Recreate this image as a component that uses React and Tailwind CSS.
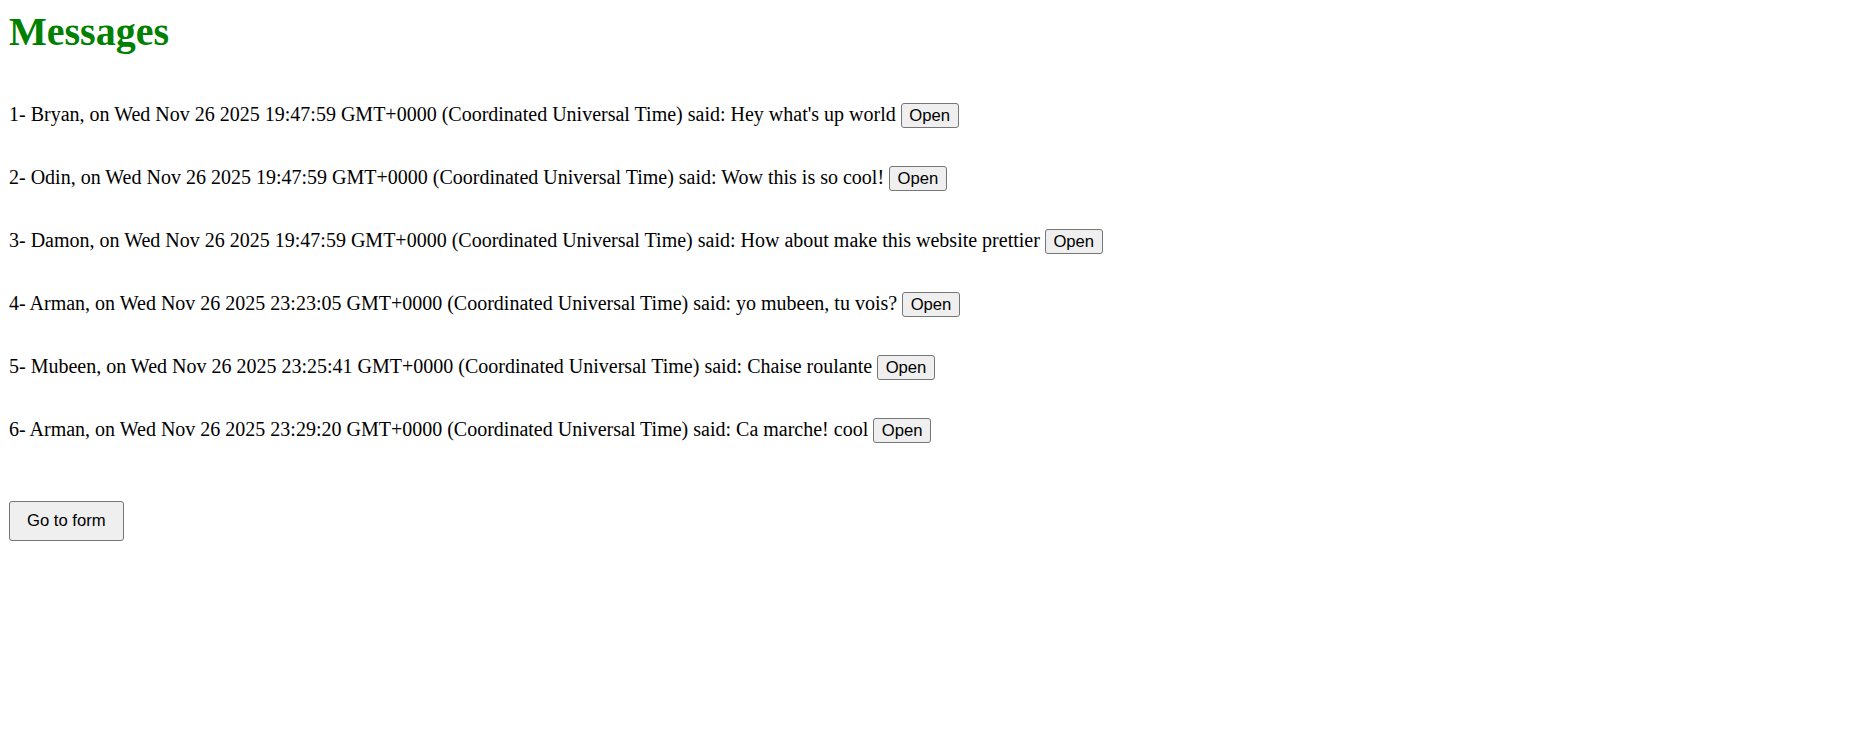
const messages = [
  { user: 'Bryan', date: 'Wed Nov 26 2025 19:47:59 GMT+0000 (Coordinated Universal Time)', text: "Hey what's up world" },
  { user: 'Odin', date: 'Wed Nov 26 2025 19:47:59 GMT+0000 (Coordinated Universal Time)', text: 'Wow this is so cool!' },
  { user: 'Damon', date: 'Wed Nov 26 2025 19:47:59 GMT+0000 (Coordinated Universal Time)', text: 'How about make this website prettier' },
  { user: 'Arman', date: 'Wed Nov 26 2025 23:23:05 GMT+0000 (Coordinated Universal Time)', text: 'yo mubeen, tu vois?' },
  { user: 'Mubeen', date: 'Wed Nov 26 2025 23:25:41 GMT+0000 (Coordinated Universal Time)', text: 'Chaise roulante' },
  { user: 'Arman', date: 'Wed Nov 26 2025 23:29:20 GMT+0000 (Coordinated Universal Time)', text: 'Ca marche! cool' },
];

export default function App() {
  return (
    <div className="min-h-screen bg-white px-[9px] pt-[9px] text-black font-['Liberation_Serif',serif] text-[20px]">
      <h1 className="text-[40px] font-bold leading-[46px] text-[#008000]">Messages</h1>

      <div className="mt-[47px] flex flex-col gap-[37.4px]">
        {messages.map((m, i) => (
          <div key={i} className="h-[25.6px] leading-[25.6px] whitespace-nowrap">
            {i + 1}- {m.user}, on {m.date} said: {m.text}{' '}
            <button className="inline-block h-[25.6px] px-[7.5px] align-baseline leading-[23px] rounded-[3px] border border-[#767676] bg-[#efefef] text-[16.67px] font-['Liberation_Sans',Arial,sans-serif] text-black">
              Open
            </button>
          </div>
        ))}
      </div>

      <button className="mt-[58px] h-[40px] px-[17px] rounded-[3px] border border-[#767676] bg-[#efefef] text-[16.67px] leading-[38px] font-['Liberation_Sans',Arial,sans-serif] text-black">
        Go to form
      </button>
    </div>
  );
}
